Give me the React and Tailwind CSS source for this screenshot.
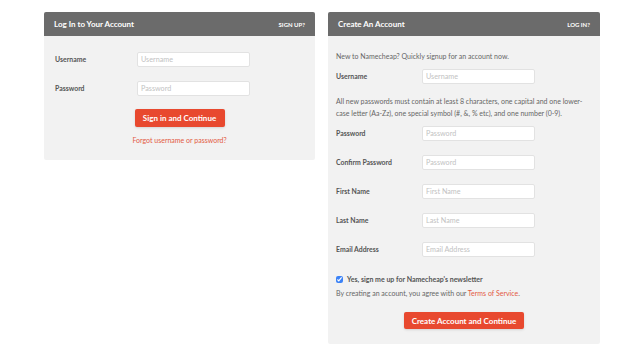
import React from "react";

const Field = ({ label, placeholder, labelWidth }) => (
  <div className="flex items-center">
    <label
      className="text-[6.9px] font-bold text-[#555]"
      style={{ width: labelWidth }}
    >
      {label}
    </label>
    <input
      type="text"
      placeholder={placeholder}
      className="w-[113px] h-[15px] bg-white border border-[#e2e2e2] rounded-[2px] px-[3px] text-[7.2px] text-[#555] placeholder:text-[#c2c2c2] outline-none"
    />
  </div>
);

const Header = ({ title, action }) => (
  <div className="h-[24px] bg-[#6b6b6b] flex items-center justify-between px-[10px] text-white">
    <h2 className="text-[8px] font-bold">{title}</h2>
    <span className="text-[6px] font-bold uppercase">{action}</span>
  </div>
);

const App = () => {
  return (
    <div
      className="w-[640px] h-[360px] bg-white flex items-start gap-[13px] pl-[44px] pt-[12px]"
      style={{ fontFamily: "Lato, 'Open Sans', sans-serif" }}
    >
      <div className="w-[271px] bg-[#f2f2f2] rounded-[2px] overflow-hidden">
        <Header title="Log In to Your Account" action="Sign up?" />
        <div className="pl-[11px] pt-[16px] pb-[14px] flex flex-col">
          <div className="flex flex-col gap-[14px]">
            <Field label="Username" placeholder="Username" labelWidth={82} />
            <Field label="Password" placeholder="Password" labelWidth={82} />
          </div>
          <div className="flex flex-col items-center pr-[11px] mt-[13px]">
            <button className="w-[90px] h-[18px] bg-[#e8492f] text-white text-[8px] font-bold rounded-[2px] shadow-sm">
              Sign in and Continue
            </button>
            <a className="mt-[8px] text-[7px] text-[#e35a43]">
              Forgot username or password?
            </a>
          </div>
        </div>
      </div>

      <div className="w-[272px] bg-[#f2f2f2] rounded-[2px] overflow-hidden">
        <Header title="Create An Account" action="Log in?" />
        <div className="px-[8px] pt-[16px] pb-[15px] flex flex-col">
          <p className="text-[7px] text-[#666] leading-[8px]">
            New to Namecheap? Quickly signup for an account now.
          </p>
          <div className="mt-[9px]">
            <Field label="Username" placeholder="Username" labelWidth={86} />
          </div>
          <p className="mt-[12px] text-[7px] text-[#666] leading-[11.5px] pr-[4px]">
            All new passwords must contain at least 8 characters, one capital and one lower-case letter (Aa-Zz), one special symbol (#, &, % etc), and one number (0-9).
          </p>
          <div className="mt-[7px] flex flex-col gap-[14px]">
            <Field label="Password" placeholder="Password" labelWidth={86} />
            <Field label="Confirm Password" placeholder="Password" labelWidth={86} />
            <Field label="First Name" placeholder="First Name" labelWidth={86} />
            <Field label="Last Name" placeholder="Last Name" labelWidth={86} />
            <Field label="Email Address" placeholder="Email Address" labelWidth={86} />
          </div>
          <label className="mt-[17px] flex items-center gap-[4px] text-[7px] font-bold text-[#555]">
            <input
              type="checkbox"
              defaultChecked
              className="w-[7px] h-[7px] m-0 accent-[#3b82f6]"
            />
            Yes, sign me up for Namecheap's newsletter
          </label>
          <p className="mt-[3px] text-[7px] text-[#666]">
            By creating an account, you agree with our{" "}
            <a className="text-[#e35a43]">Terms of Service</a>.
          </p>
          <div className="flex justify-center mt-[14px]">
            <button className="w-[120px] h-[17px] bg-[#e8492f] text-white text-[8px] font-bold rounded-[2px] shadow-sm">
              Create Account and Continue
            </button>
          </div>
        </div>
      </div>
    </div>
  );
};

export default App;
